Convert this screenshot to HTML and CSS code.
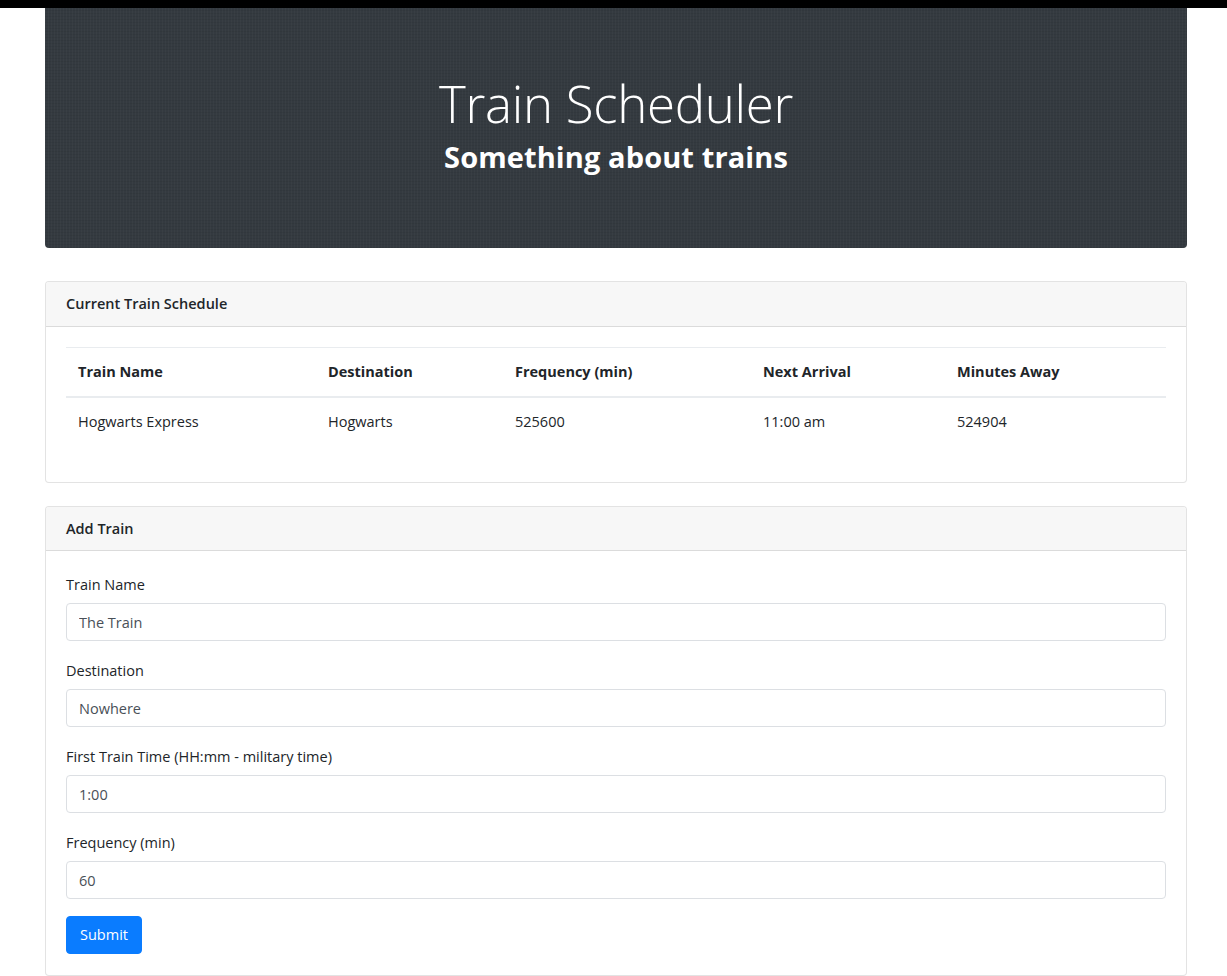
FILE: index.html
```html
<!DOCTYPE html>
<html lang="en">
<head>
<meta charset="utf-8">
<title>Train Scheduler</title>
<link rel="stylesheet" href="styles.css">
</head>
<body>
<div class="topbar"></div>
<div class="container">
  <header class="jumbotron">
    <h1 class="title">Train Scheduler</h1>
    <h3 class="subtitle">Something about trains</h3>
  </header>

  <section class="card">
    <div class="card-header">Current Train Schedule</div>
    <div class="card-body">
      <table class="table">
        <thead>
          <tr>
            <th class="c1">Train Name</th>
            <th class="c2">Destination</th>
            <th class="c3">Frequency (min)</th>
            <th class="c4">Next Arrival</th>
            <th class="c5">Minutes Away</th>
          </tr>
        </thead>
        <tbody>
          <tr>
            <td>Hogwarts Express</td>
            <td>Hogwarts</td>
            <td>525600</td>
            <td>11:00 am</td>
            <td>524904</td>
          </tr>
        </tbody>
      </table>
    </div>
  </section>

  <section class="card">
    <div class="card-header card-header-sm">Add Train</div>
    <div class="card-body form-body">
      <form class="form">
        <div class="form-group">
          <label class="label" for="name">Train Name</label>
          <input class="input" id="name" type="text" value="The Train">
        </div>
        <div class="form-group">
          <label class="label" for="dest">Destination</label>
          <input class="input" id="dest" type="text" value="Nowhere">
        </div>
        <div class="form-group">
          <label class="label" for="first">First Train Time (HH:mm - military time)</label>
          <input class="input" id="first" type="text" value="1:00">
        </div>
        <div class="form-group">
          <label class="label" for="freq">Frequency (min)</label>
          <input class="input" id="freq" type="text" value="60">
        </div>
        <button class="btn" type="button">Submit</button>
      </form>
    </div>
  </section>
</div>
</body>
</html>
```

FILE: styles.css
```css
* { box-sizing: border-box; }

html, body {
  margin: 0;
  padding: 0;
  background: #fff;
}

body {
  font-family: "Open Sans", "Noto Sans", "Liberation Sans", sans-serif;
  font-size: 15px;
  line-height: 24px;
  color: #212529;
  overflow: hidden;
}

.topbar {
  height: 8px;
  background: #000;
}

.container {
  width: 1142px;
  margin: 0 0 0 45px;
}

.jumbotron {
  background-color: #343a40;
  background-image:
    repeating-linear-gradient(90deg, rgba(255,255,255,0.025) 0 1px, transparent 1px 3px),
    repeating-linear-gradient(0deg, rgba(0,0,0,0.06) 0 1px, transparent 1px 3px);
  color: #fff;
  text-align: center;
  border-radius: 0 0 4px 4px;
  padding: 64px 32px 58px;
  margin-bottom: 33px;
  height: 240px;
}

.title {
  margin: 0 0 6px;
  font-weight: 300;
  font-size: 51px;
  line-height: 62px;
  letter-spacing: -0.3px;
}

.subtitle {
  margin: 0;
  font-weight: 700;
  font-size: 29px;
  line-height: 34px;
  letter-spacing: 0.1px;
}

.card {
  border: 1px solid rgba(0,0,0,0.11);
  border-radius: 4px;
  margin-bottom: 23px;
  background: #fff;
}

.card-header {
  background: #f7f7f7;
  border-bottom: 1px solid rgba(0,0,0,0.11);
  padding: 10px 20px;
  height: 45px;
  font-weight: 600;
  font-size: 14.5px;
  color: #212529;
  border-radius: 3px 3px 0 0;
}

.card-header-sm {
  height: 44px;
}

.card-body {
  padding: 20px 20px 20px;
}

.table {
  width: 100%;
  border-collapse: collapse;
  margin-bottom: 16px;
}

.table th,
.table td {
  text-align: left;
  padding: 12px 12px;
  border-top: 1px solid #e9ecef;
  vertical-align: top;
  font-size: 14.5px;
}

.table th {
  font-weight: 700;
  border-bottom: 2px solid #e9ecef;
  height: 49px;
}

.table td {
  border-top: none;
  height: 49px;
}

.c1 { width: 250px; }
.c2 { width: 187px; }
.c3 { width: 248px; }
.c4 { width: 194px; }

.form-body {
  padding: 20px 20px 21px;
}

.form-group {
  display: flex;
  flex-direction: column;
  margin-bottom: 16px;
}

.label {
  display: block;
  padding-top: 2px;
  margin-bottom: 6px;
  font-size: 14.5px;
  color: #212529;
}

.input {
  display: block;
  width: 100%;
  height: 38px;
  padding: 6px 12px;
  font-family: inherit;
  font-size: 14.5px;
  line-height: 24px;
  color: #495057;
  background: #fff;
  border: 1px solid #dcdfe3;
  border-radius: 4px;
  outline: none;
}

.btn {
  display: inline-block;
  height: 38px;
  width: 76px;
  padding: 6px 12px;
  font-family: inherit;
  font-size: 14.5px;
  line-height: 24px;
  color: #fff;
  background: #0a7cff;
  border: 1px solid #0a7cff;
  border-radius: 4px;
  margin-top: 1px;
}
```
